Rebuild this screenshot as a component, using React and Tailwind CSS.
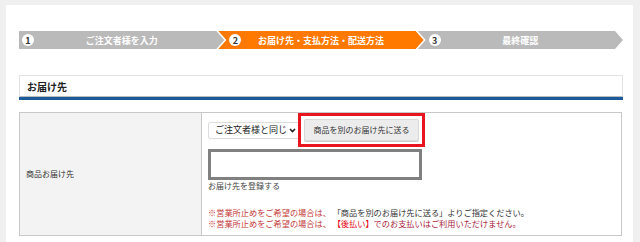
import React from "react";

const font = { fontFamily: '"Noto Sans CJK JP", "Noto Sans", sans-serif' };

function Step({ num, label, active, first }) {
    // chevron shape; later steps get a notch on the left
    const shape = first
        ? "[clip-path:polygon(0_0,calc(100%-8px)_0,100%_50%,calc(100%-8px)_100%,0_100%)]"
        : "[clip-path:polygon(0_0,calc(100%-8px)_0,100%_50%,calc(100%-8px)_100%,0_100%,8px_50%)]";
    return (
        <div
            className={`relative flex h-[18px] flex-1 items-center justify-center ${shape} ${
                active ? "bg-[#ff7800]" : "bg-[#bababa]"
            } ${first ? "" : "-ml-[6px]"}`}
        >
            <span
                className={`absolute top-[3px] flex h-[12px] w-[12px] items-center justify-center rounded-full bg-white text-[9px] font-bold leading-none text-[#333] ${
                    first ? "left-[3px]" : "left-[11px]"
                }`}
            >
                {num}
            </span>
            <span className="text-[9px] font-bold leading-none text-white">{label}</span>
        </div>
    );
}

export default function App() {
    return (
        <div className="min-h-[242px] bg-[#f0f0f0] pl-[6px] pr-[7px] pt-[5px]" style={font}>
            <div className="min-h-[237px] bg-white pl-[13px] pr-[10px] pt-[26px]">
                {/* Steps */}
                <div className="flex w-[604px]">
                    <Step num="1" label="ご注文者様を入力" first />
                    <Step num="2" label="お届け先・支払方法・配送方法" active />
                    <Step num="3" label="最終確認" />
                </div>

                {/* Section header */}
                <div className="mt-[26px] w-[604px]">
                    <div className="flex h-[22px] items-center border border-b-[#bbb] border-[#e2e2e2] pl-[7px] text-[10px] font-bold text-[#222]">
                        お届け先
                    </div>
                    <div className="h-[3px] bg-[#1b5a9b]" />
                </div>

                {/* Table */}
                <div className="mt-[12px] flex h-[124px] w-[603px] border border-[#c8c8c8]">
                    <div className="flex w-[182px] shrink-0 items-center border-r border-[#c8c8c8] bg-[#f3f3f3] pl-[6px] text-[8px] text-[#333]">
                        商品お届け先
                    </div>
                    <div className="flex flex-col pl-[6px]">
                        <div className="flex items-center">
                            <div className="flex h-[17px] w-[92px] items-center justify-between rounded-[2px] border border-[#dcdcdc] bg-white pl-[6px] pr-[3px] text-[9px] text-[#222]">
                                <span>ご注文者様と同じ</span>
                                <svg width="7" height="5" viewBox="0 0 7 5">
                                    <path d="M1 1 L3.5 3.5 L6 1" fill="none" stroke="#222" strokeWidth="1.6" />
                                </svg>
                            </div>
                            <div className="-ml-[2px] border-[3px] border-[#e8141f] p-[3px]">
                                <div className="flex h-[22px] w-[115px] items-center justify-center rounded-[2px] border border-[#d8d8d8] bg-[#ececec] text-[8px] text-[#333] shadow-[0_1px_0_#cfcfcf]">
                                    商品を別のお届け先に送る
                                </div>
                            </div>
                        </div>
                        <div className="mt-[2px] h-[31px] w-[214px] border-[3px] border-[#808080] bg-white" />
                        <div className="mt-[1px] text-[8px] leading-[10px] text-[#444]">お届け先を登録する</div>
                        <div className="mt-[16px] text-[8.2px] leading-[11px]">
                            <div>
                                <span className="text-[#c43a3a]">※営業所止めをご希望の場合は、 </span>
                                <span className="text-[#333]">「商品を別のお届け先に送る」よりご指定ください。</span>
                            </div>
                            <div>
                                <span className="text-[#c43a3a]">※営業所止めをご希望の場合は、 </span>
                                <span className="text-[#e60012]">【後払い】</span>
                                <span className="text-[#a8213a]">でのお支払いはご利用いただけません。</span>
                            </div>
                        </div>
                    </div>
                </div>
            </div>
        </div>
    );
}
